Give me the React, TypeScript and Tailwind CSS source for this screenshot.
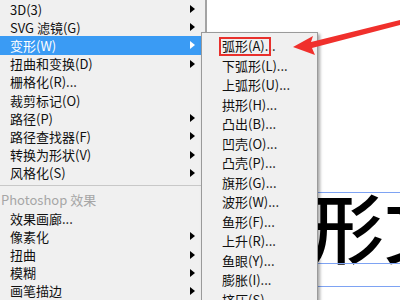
import React from "react";

const font = { fontFamily: '"Microsoft YaHei", "Noto Sans CJK SC", "Noto Sans", sans-serif' };

const topItems = [
  { label: "3D(3)", sub: true },
  { label: "SVG 滤镜(G)", sub: true },
  { label: "变形(W)", sub: true, active: true },
  { label: "扭曲和变换(D)", sub: true },
  { label: "栅格化(R)...", sub: false },
  { label: "裁剪标记(O)", sub: false },
  { label: "路径(P)", sub: true },
  { label: "路径查找器(F)", sub: true },
  { label: "转换为形状(V)", sub: true },
  { label: "风格化(S)", sub: true },
];

const psItems = [
  { label: "效果画廊...", sub: false },
  { label: "像素化", sub: true },
  { label: "扭曲", sub: true },
  { label: "模糊", sub: true },
  { label: "画笔描边", sub: true },
];

const warpItems = [
  "弧形(A)...",
  "下弧形(L)...",
  "上弧形(U)...",
  "拱形(H)...",
  "凸出(B)...",
  "凹壳(O)...",
  "凸壳(P)...",
  "旗形(G)...",
  "波形(W)...",
  "鱼形(F)...",
  "上升(R)...",
  "鱼眼(Y)...",
  "膨胀(I)...",
  "挤压(S)...",
];

function Caret({ white }: { white?: boolean }) {
  return (
    <svg width="5" height="8" viewBox="0 0 5 8" className="ml-auto mr-[10px] flex-shrink-0">
      <path d="M0 0L5 4L0 8Z" fill={white ? "#ffffff" : "#000000"} />
    </svg>
  );
}

function MenuRow({ label, sub, active }: { label: string; sub: boolean; active?: boolean }) {
  return (
    <div
      className={`flex h-[18.5px] items-center pl-[10px] text-[13px] leading-none ${
        active ? "bg-[#3a9bf4] text-white" : "text-[#111111]"
      }`}
    >
      {label}
      {sub && <Caret white={active} />}
    </div>
  );
}

export default function App() {
  return (
    <div className="relative flex h-[300px] w-[400px] overflow-hidden bg-white" style={font}>
      {/* Main effect menu */}
      <div className="flex h-full w-[207px] flex-shrink-0 flex-col border-r-2 border-[#a3a3a3] bg-[#f0f0f0]">
        {topItems.map((it) => (
          <MenuRow key={it.label} {...it} />
        ))}
        <div className="mb-[5px] mt-[3px] h-px bg-[#c8c8c8]" />
        <div className="flex h-[18.5px] items-center pl-[1px] text-[13px] leading-none text-[#a6a6a6]">
          Photoshop 效果
        </div>
        {psItems.map((it) => (
          <MenuRow key={it.label} {...it} />
        ))}
      </div>

      {/* Canvas: artboard with guide lines and the sample text */}
      <div className="flex flex-1 flex-col bg-white pt-[183px]">
        <div className="relative">
          <div className="absolute left-0 right-0 top-[9px] h-px bg-[#7ea3f3]" />
          <div className="absolute left-0 right-0 top-[80px] h-px bg-[#7ea3f3]" />
          <div className="absolute left-0 right-0 top-[103px] h-px bg-[#7ea3f3]" />
          <div className="ml-[25px] whitespace-nowrap pt-[4px] text-[76px] font-medium leading-none text-black">
            弧形文字
          </div>
        </div>
      </div>

      {/* Warp submenu */}
      <div className="absolute left-[201px] top-[32px] flex h-[290px] w-[117px] flex-col border border-[#9a9a9a] bg-[#f0f0f0] pt-[3px] shadow-[2px_2px_3px_rgba(0,0,0,0.35)]">
        {warpItems.map((label, i) => (
          <div key={label} className="relative flex h-[19.5px] items-center pl-[20px] text-[13px] leading-none text-[#111111]">
            {label}
            {i === 0 && (
              <div className="absolute left-[17px] top-[1px] h-[19px] w-[52px] border-2 border-[#e8302c]" />
            )}
          </div>
        ))}
      </div>

      {/* Red pointer arrow */}
      <svg className="absolute left-0 top-0" width="400" height="300" viewBox="0 0 400 300">
        <polygon points="293,47 313,36 311,42 400,20 400,25 312,48 315,55" fill="#f0302c" />
      </svg>
    </div>
  );
}
